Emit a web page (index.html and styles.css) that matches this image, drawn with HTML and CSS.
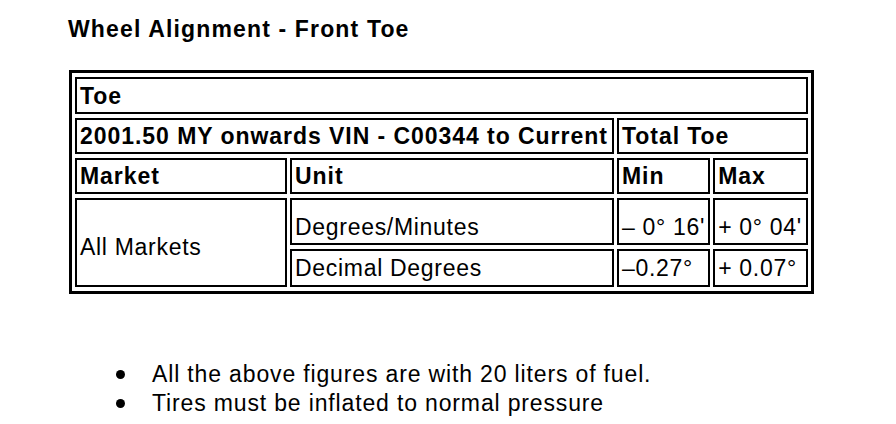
FILE: index.html
```html
<!DOCTYPE html>
<html>
<head>
<meta charset="utf-8">
<link rel="stylesheet" href="styles.css">
</head>
<body>
<div class="page">
  <h1 class="title">Wheel Alignment - Front Toe</h1>
  <table class="spec">
    <colgroup>
      <col class="c-market">
      <col class="c-unit">
      <col class="c-min">
      <col class="c-max">
    </colgroup>
    <tr class="r1"><th colspan="4">Toe</th></tr>
    <tr class="r2"><th colspan="2">2001.50 MY onwards VIN - C00344 to Current</th><th colspan="2">Total Toe</th></tr>
    <tr class="r3"><th>Market</th><th>Unit</th><th>Min</th><th>Max</th></tr>
    <tr class="r4"><td rowspan="2" class="market">All Markets</td><td>Degrees/Minutes</td><td>– 0° 16'</td><td>+ 0° 04'</td></tr>
    <tr class="r5"><td>Decimal Degrees</td><td>–0.27°</td><td>+ 0.07°</td></tr>
  </table>
  <ul class="notes">
    <li>All the above figures are with 20 liters of fuel.</li>
    <li>Tires must be inflated to normal pressure</li>
  </ul>
</div>
</body>
</html>
```
FILE: styles.css
```css
html, body {
  margin: 0;
  padding: 0;
  background: #fff;
  color: #000;
}
.page {
  padding-left: 68px;
  font-family: "Liberation Sans", Arial, sans-serif;
  font-size: 23px;
}
.title {
  margin: 17px 0 28px 0;
  font-size: 23px;
  line-height: 25px;
  font-weight: bold;
  letter-spacing: 1.15px;
}
.spec {
  border: 3px solid #000;
  border-spacing: 3px 4px;
  margin-left: 1px;
}
.c-market { width: 212px; }
.c-unit { width: 324px; }
.c-min { width: 93px; }
.c-max { width: 95px; }
.spec th, .spec td {
  border: 2px solid #000;
  padding: 4px 3px;
  line-height: 24px;
  text-align: left;
  vertical-align: middle;
  white-space: nowrap;
  font-size: 23px;
}
.spec th {
  font-weight: bold;
  letter-spacing: 0.95px;
}
.spec td {
  font-weight: normal;
  letter-spacing: 0.7px;
}
.spec .r1 th { padding-top: 5px; }
.spec .r4 td { padding-top: 15px; }
.spec .r5 td { padding-top: 5px; padding-bottom: 5px; }
.spec .r4 td.market { padding-top: 12px; }
.notes {
  list-style: none;
  margin: 66px 0 0 48px;
  padding: 0;
}
.notes li {
  display: flex;
  align-items: center;
  line-height: 29px;
  letter-spacing: 0.85px;
}
.notes li::before {
  content: "";
  width: 9px;
  height: 9px;
  border-radius: 50%;
  background: #000;
  margin-right: 27px;
  flex: none;
}
```
